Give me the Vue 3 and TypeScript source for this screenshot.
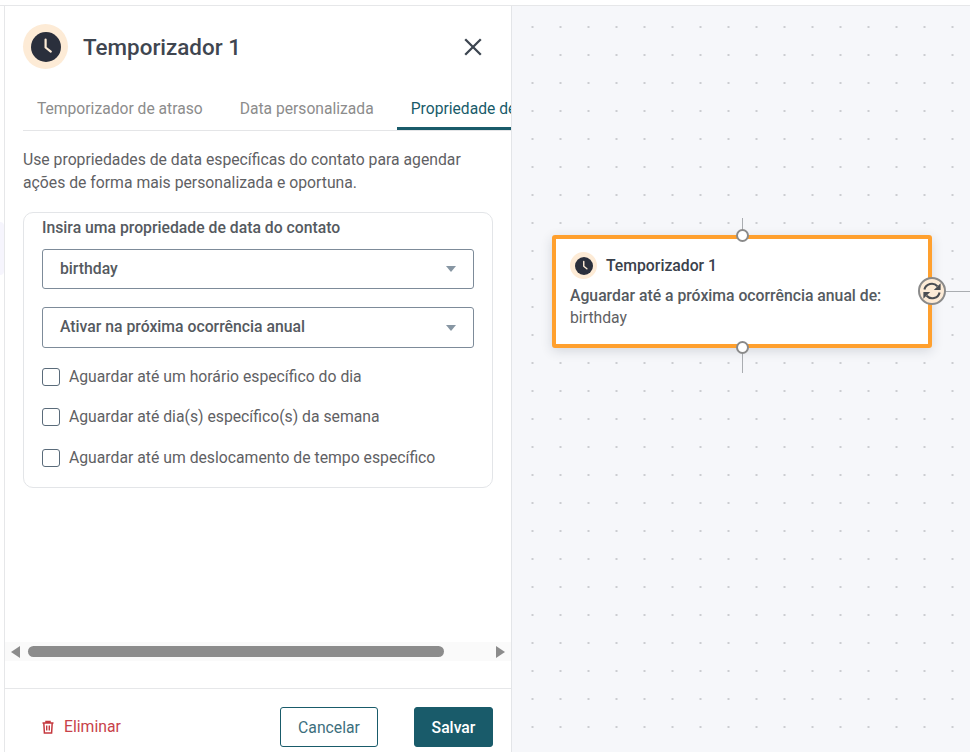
<script setup lang="ts">
const tabs = ['Temporizador de atraso', 'Data personalizada', 'Propriedade de data']
const selects = ['birthday', 'Ativar na próxima ocorrência anual']
const checks = [
  'Aguardar até um horário específico do dia',
  'Aguardar até dia(s) específico(s) da semana',
  'Aguardar até um deslocamento de tempo específico',
]
</script>

<template>
  <div class="page">
    <div class="topstrip"></div>
    <div class="main">
      <div class="gutter"><span class="gutter-mark"></span></div>
      <section class="panel">
        <header class="head">
          <span class="avatar">
            <svg width="30" height="30" viewBox="0 0 30 30">
              <circle cx="15" cy="15" r="15" fill="#2a2f3c" />
              <path d="M14.6 7.5V15.5L19.8 19.6" fill="none" stroke="#fdebd6" stroke-width="2.2" stroke-linecap="round" stroke-linejoin="round" />
            </svg>
          </span>
          <h1 class="title">Temporizador 1</h1>
          <svg class="close" width="18" height="18" viewBox="0 0 18 18">
            <path d="M1.2 1.2L16.8 16.8M16.8 1.2L1.2 16.8" stroke="#3d4651" stroke-width="2.3" fill="none" />
          </svg>
        </header>
        <nav class="tabs">
          <span v-for="(t, i) in tabs" :key="t" class="tab" :class="{ active: i === 2 }">{{ t }}</span>
        </nav>
        <div class="body">
          <p class="desc">Use propriedades de data específicas do contato para agendar ações de forma mais personalizada e oportuna.</p>
          <div class="card">
            <div class="label">Insira uma propriedade de data do contato</div>
            <div v-for="s in selects" :key="s" class="select">
              <span class="select-text">{{ s }}</span>
              <i class="caret"></i>
            </div>
            <label v-for="c in checks" :key="c" class="check">
              <span class="box"></span>
              <span class="check-text">{{ c }}</span>
            </label>
          </div>
        </div>
        <div class="scrollbar">
          <i class="arrow left"></i>
          <div class="track"><div class="thumb"></div></div>
          <i class="arrow right"></i>
        </div>
        <footer class="foot">
          <span class="del">
            <svg width="14" height="14" viewBox="0 0 14 14">
              <path d="M1.5 3H12.5M5 3V1.4H9V3M2.8 3L3.4 13H10.6L11.2 3" fill="none" stroke="#c5393f" stroke-width="1.5" />
              <path d="M5.7 5.6V10.6M8.3 5.6V10.6" fill="none" stroke="#c5393f" stroke-width="1.4" />
            </svg>
            <span class="del-text">Eliminar</span>
          </span>
          <button class="btn ghost">Cancelar</button>
          <button class="btn solid">Salvar</button>
        </footer>
      </section>
      <section class="canvas">
        <div class="wire v top"></div>
        <div class="wire v bottom"></div>
        <div class="wire h"></div>
        <article class="node">
          <div class="node-head">
            <span class="node-avatar">
              <svg width="18" height="18" viewBox="0 0 30 30">
                <circle cx="15" cy="15" r="15" fill="#2a2f3c" />
                <path d="M14.6 7.5V15.5L19.8 19.6" fill="none" stroke="#fdebd6" stroke-width="2.4" stroke-linecap="round" stroke-linejoin="round" />
              </svg>
            </span>
            <span class="node-title">Temporizador 1</span>
          </div>
          <div class="node-strong">Aguardar até a próxima ocorrência anual de:</div>
          <div class="node-text">birthday</div>
          <span class="dot dot-top"></span>
          <span class="dot dot-bottom"></span>
          <span class="sync">
            <svg viewBox="0 0 20 20" fill="none" stroke="#4a4d52" stroke-width="2.1">
              <path d="M2.4 8.6A7.6 7.6 0 0 1 15.4 5.2" />
              <path d="M17.6 11.4A7.6 7.6 0 0 1 4.6 14.8" />
              <path d="M18.6 2.2V9H11.8Z" fill="#4a4d52" stroke="none" />
              <path d="M1.4 17.8V11H8.2Z" fill="#4a4d52" stroke="none" />
            </svg>
          </span>
        </article>
      </section>
    </div>
  </div>
</template>

<style>
html, body { margin: 0; overflow: hidden; background: #fff; }
</style>

<style scoped>
.page {
  width: 970px;
  height: 752px;
  display: flex;
  flex-direction: column;
  overflow: hidden;
  font-family: Roboto, "Liberation Sans", sans-serif;
  color: #555;
}
.topstrip { height: 5px; flex: none; border-bottom: 1px solid #e6e7e9; box-sizing: content-box; }
.main { flex: 1; display: flex; min-height: 0; }
.gutter { width: 4px; flex: none; border-right: 1px solid #e6e7e9; position: relative; }
.gutter-mark { position: absolute; left: 0; top: 216px; width: 4px; height: 53px; background: #f6f5fd; border-radius: 0 8px 8px 0; }
.panel { width: 506px; flex: none; display: flex; flex-direction: column; background: #fff; border-right: 1px solid #e3e5e8; overflow: hidden; }
.head { height: 83px; flex: none; display: flex; align-items: center; padding: 0 29px 0 18px; box-sizing: border-box; padding-bottom: 2px; }
.avatar { width: 45px; height: 45px; border-radius: 50%; background: #fdebd6; display: flex; align-items: center; justify-content: center; flex: none; }
.title { margin: 0 0 0 15px; flex: 1; font-size: 22.4px; line-height: 30px; font-weight: 500; color: #3f4650; }
.close { flex: none; }
.tabs { display: flex; margin-left: 18px; height: 42px; box-sizing: border-box; border-bottom: 1px solid #e4e5e7; flex: none; white-space: nowrap; }
.tab { padding: 0 14px; font-size: 15.65px; line-height: 39px; color: #8c8c8c; flex: none; margin-right: 9px; }
.tab.active { color: #195b6a; height: 41px; border-bottom: 3px solid #195b6a; box-sizing: border-box; margin-right: 0; }
.body { flex: 1; padding: 17px 18px 0; min-height: 0; }
.desc { margin: 0 0 18px; font-size: 15.75px; line-height: 23px; color: #5f6164; }
.card { border: 1px solid #e3e5e8; border-radius: 10px; height: 276px; box-sizing: border-box; padding: 4px 18px 0; }
.label { font-size: 15.75px; line-height: 22px; font-weight: 500; color: #555a60; margin-bottom: 10px; }
.select { height: 40px; box-sizing: border-box; border: 1px solid #7d8b99; border-radius: 3px; display: flex; align-items: center; justify-content: space-between; padding: 0 17px; font-size: 15.75px; font-weight: 500; color: #555a60; margin-bottom: 18px; }
.select-text { margin-top: -2px; }
.select + .select { height: 41px; margin-bottom: 20px; }
.caret { width: 0; height: 0; border-left: 5px solid transparent; border-right: 5px solid transparent; border-top: 6px solid #8796a3; }
.check { display: flex; align-items: center; gap: 9px; height: 18px; font-size: 15.75px; color: #5f6164; margin-bottom: 22px; }
.check-text { margin-top: -2px; }
.check:last-child { margin-bottom: 0; margin-top: 23px; }
.box { width: 18px; height: 18px; box-sizing: border-box; border: 1px solid #5a6b7a; border-radius: 3px; flex: none; }
.scrollbar { height: 19px; flex: none; background: #fafafa; display: flex; align-items: center; padding: 0 6px; }
.track { flex: 1; padding: 0 8px; height: 11px; }
.thumb { width: 416px; height: 11px; border-radius: 6px; background: #8c8c8c; }
.arrow { width: 0; height: 0; border-top: 6px solid transparent; border-bottom: 6px solid transparent; flex: none; }
.arrow.left { border-right: 9px solid #8c8c8c; }
.arrow.right { border-left: 9px solid #8c8c8c; }
.foot { height: 45px; margin-top: 27px; flex: none; border-top: 1px solid #e6e7e9; display: flex; align-items: flex-start; padding: 18px 18px 0 36px; box-sizing: content-box; }
.del { display: flex; align-items: center; gap: 9px; flex: 1; height: 40px; font-size: 15.75px; color: #c8424a; }
.del-text { margin-top: -2px; }
.btn { height: 40px; box-sizing: border-box; border-radius: 3px; font-family: inherit; font-size: 15.75px; padding: 0; }
.ghost { width: 98px; background: #fff; border: 1px solid #195b6a; color: #3d6f7d; margin-right: 36px; }
.solid { width: 79px; background: #195b6a; border: 1px solid #195b6a; color: #fff; font-weight: 500; }
.canvas { flex: 1; position: relative; background-color: #f6f7fa; background-image: radial-gradient(circle at center, #b4b6ba 0, #b4b6ba 0.6px, transparent 0.9px); background-size: 28px 28px; background-position: 6.5px 7px; overflow: hidden; }
.wire { position: absolute; background: #aaadb1; }
.wire.v { width: 1px; left: 230px; }
.wire.top { top: 212px; height: 12px; }
.wire.bottom { top: 346px; height: 21px; }
.wire.h { height: 1px; left: 432px; right: 0; top: 285px; }
.node { position: absolute; left: 40px; top: 229px; width: 380px; height: 113px; box-sizing: border-box; border: 4px solid #ffa02e; border-radius: 3px; background: #fff; box-shadow: 0 3px 12px rgba(40, 50, 70, 0.16); padding: 13px 14px; }
.node-head { display: flex; align-items: center; gap: 9px; height: 27px; margin-bottom: 6px; }
.node-avatar { width: 27px; height: 27px; border-radius: 50%; background: #fdebd6; display: flex; align-items: center; justify-content: center; flex: none; }
.node-title { font-size: 15.75px; font-weight: 500; color: #3a414b; }
.node-strong { font-size: 15.75px; line-height: 22px; font-weight: 500; color: #555a60; white-space: nowrap; }
.node-text { font-size: 15.75px; line-height: 22px; color: #5f6164; }
.dot { position: absolute; left: 180px; width: 13px; height: 13px; box-sizing: border-box; border-radius: 50%; border: 2px solid #8a8a8a; background: #fff; }
.dot-top { top: -10px; }
.dot-bottom { bottom: -10px; }
.sync { position: absolute; right: -18px; top: 38px; width: 28px; height: 28px; box-sizing: border-box; border-radius: 50%; border: 2px solid #8a8a8a; background: #fdebd6; display: flex; align-items: center; justify-content: center; }
.sync svg { width: 20px; height: 20px; }
</style>
